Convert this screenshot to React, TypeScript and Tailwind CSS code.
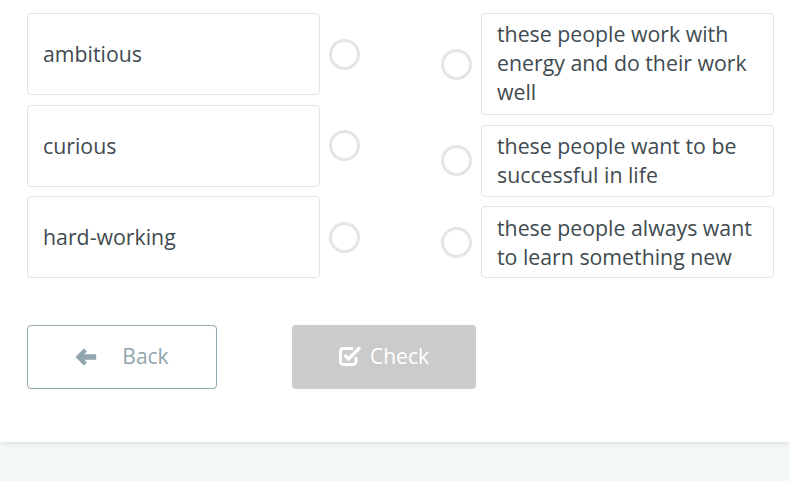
import React from "react";

const font = { fontFamily: '"Open Sans", "Noto Sans", sans-serif' };

function Circle() {
  return <div className="w-[31px] h-[31px] rounded-full border-[3px] border-[#e3e6e7] bg-white shrink-0" />;
}

export default function App() {
  const left = ["ambitious", "curious", "hard-working"];
  const right = [
    { t: ["these people work with", "energy and do their work", "well"], h: "h-[102px] pb-[3px]" },
    { t: ["these people want to be", "successful in life"], h: "h-[72px] pb-[1px]" },
    { t: ["these people always want", "to learn something new"], h: "h-[72px]" },
  ];
  return (
    <div className="w-[790px] h-[481px] bg-[#f4f8f9] overflow-hidden" style={font}>
      <div className="bg-white h-[442px] shadow-[0_1px_6px_rgba(0,0,0,0.12)] pt-[13px] pl-[27px] pr-[16px] relative">
        <div className="flex">
          <div className="flex flex-col gap-[9.5px]">
            {left.map((l) => (
              <div key={l} className="flex items-center">
                <div className="w-[293px] h-[82px] border border-[#dde6e6] rounded-[4px] flex items-center pl-[15px] text-[21.3px] text-[#3f4b50]">
                  {l}
                </div>
                <div className="ml-[9px]">
                  <Circle />
                </div>
              </div>
            ))}
          </div>
          <div className="flex flex-col gap-[9.5px] ml-[81px]">
            {right.map((r, i) => (
              <div key={i} className="flex items-center">
                <Circle />
                <div
                  className={`ml-[9px] w-[293px] ${r.h} border border-[#dde6e6] rounded-[4px] flex flex-col justify-center pl-[15px] text-[21.3px] leading-[29px] text-[#3f4b50]`}
                >
                  {r.t.map((x, j) => (
                    <div key={j}>{x}</div>
                  ))}
                </div>
              </div>
            ))}
          </div>
        </div>
        <div className="flex mt-[47px]">
          <div className="w-[190px] h-[64px] border border-[#93a8b0] rounded-[4px] flex items-center justify-center text-[21px] text-[#8fa6ae] gap-[25px]">
            <svg width="22" height="18" viewBox="0 0 22 18">
              <path d="M9 1.5 L1.5 9 L9 16.5 L11 14.5 L7.5 11 L20.5 11 L20.5 7 L7.5 7 L11 3.5 Z" fill="#8fa6ae" strokeLinejoin="round" stroke="#8fa6ae" strokeWidth="1.5" />
            </svg>
            <span>Back</span>
          </div>
          <div className="ml-[75px] w-[184px] h-[64px] rounded-[4px] bg-[#cbcbcb] flex items-center justify-center text-[21px] text-white gap-[8px]">
            <svg width="23" height="22" viewBox="0 0 23 22" className="shrink-0 -mt-[3px]">
              <path d="M17 12 L17 16.5 Q17 19.5 14 19.5 L4.5 19.5 Q1.5 19.5 1.5 16.5 L1.5 6.5 Q1.5 3.5 4.5 3.5 L14 3.5" fill="none" stroke="white" strokeWidth="2.8" />
              <path d="M5.5 10 L9.5 14 L21 2.5" fill="none" stroke="white" strokeWidth="3.4" />
            </svg>
            <span>Check</span>
          </div>
        </div>
      </div>
    </div>
  );
}
